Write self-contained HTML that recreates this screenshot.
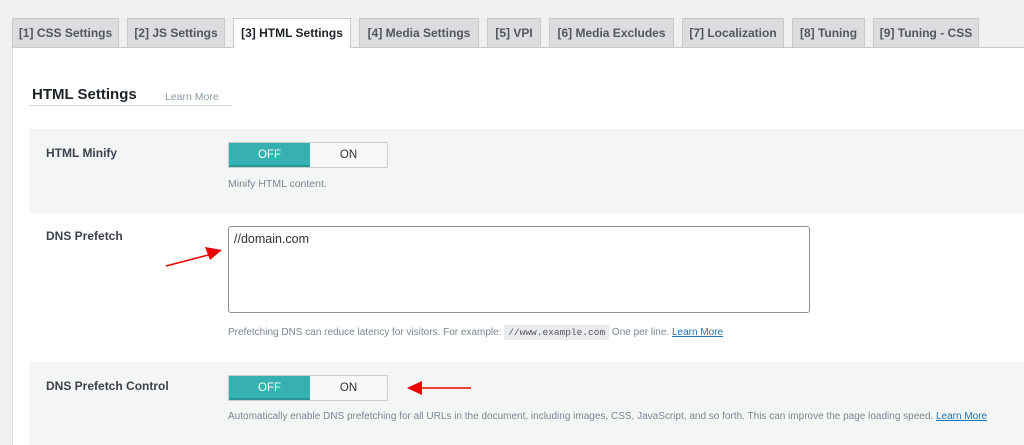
<!DOCTYPE html>
<html><head><meta charset="utf-8"><style>
body{margin:0;width:1024px;height:445px;background:#f0f0f1;font-family:"Liberation Sans",sans-serif;position:relative;overflow:hidden}
.tab{position:absolute;top:18px;height:29px;background:#dcdcde;border:1px solid #c9c9cc;border-bottom:none;box-sizing:border-box;color:#50575e;font-size:12px;font-weight:bold;line-height:28px;text-align:center}
.tab.a{background:#fff;color:#1d2327;height:30px;z-index:2}
.panel{position:absolute;left:12px;top:47px;right:0;bottom:0;background:#fff;border-top:1px solid #c9c9cc;border-left:1px solid #e0e0e0}
.abs{position:absolute}
.lbl{position:absolute;left:46px;font-size:12px;font-weight:bold;color:#3c434a}
.desc{position:absolute;left:228px;font-size:10.5px;color:#7a8791;white-space:nowrap}
.tg{position:absolute;left:228px;width:160px;height:26px;border:1px solid #ccc;border-radius:2px;box-sizing:border-box;background:#f6f7f7;font-size:11.5px}
.tg .off{position:absolute;left:0;top:0;width:81px;height:100%;background:#36b0b0;color:#fff;text-align:center;line-height:25px;border-bottom:2px solid #2a9595;box-sizing:border-box}
.tg .on{position:absolute;left:81px;top:0;right:0;height:100%;text-align:center;line-height:25px;color:#333}
a{color:#2271b1;text-decoration:underline}
</style></head><body>
<div class="tab" style="left:12px;width:107px">[1] CSS Settings</div>
<div class="tab" style="left:127px;width:98px">[2] JS Settings</div>
<div class="tab a" style="left:233px;width:118px">[3] HTML Settings</div>
<div class="tab" style="left:359px;width:120px">[4] Media Settings</div>
<div class="tab" style="left:487px;width:54px">[5] VPI</div>
<div class="tab" style="left:549px;width:125px">[6] Media Excludes</div>
<div class="tab" style="left:682px;width:102px">[7] Localization</div>
<div class="tab" style="left:792px;width:73px">[8] Tuning</div>
<div class="tab" style="left:873px;width:106px">[9] Tuning - CSS</div>
<div class="panel"></div>
<div class="abs" style="left:32px;top:86px;font-size:15px;font-weight:bold;color:#1d2327">HTML Settings</div>
<div class="abs" style="left:165px;top:91px;font-size:10.5px;color:#8a9aa8">Learn More</div>
<div class="abs" style="left:29px;top:105px;width:203px;height:1px;background:#d5d5d5"></div>

<div class="abs" style="left:29px;top:129px;right:0;height:84px;background:#f4f5f5"></div>
<div class="lbl" style="top:146px">HTML Minify</div>
<div class="tg" style="top:142px"><div class="off">OFF</div><div class="on">ON</div></div>
<div class="desc" style="top:178px">Minify HTML content.</div>

<div class="lbl" style="top:229px">DNS Prefetch</div>
<div class="abs" style="left:228px;top:226px;width:582px;height:87px;border:1px solid #8c8f94;border-radius:3px;box-sizing:border-box;background:#fff;font-size:12.5px;color:#2c3338;padding:5px 0 0 5px">//domain.com</div>
<div class="desc" style="top:327px;font-size:10px;letter-spacing:0px">Prefetching DNS can reduce latency for visitors. For example: <span style="font-family:'Liberation Mono',monospace;background:#e8ecef;padding:2px 4px;font-size:9.5px;color:#555">//www.example.com</span> One per line. <a>Learn More</a></div>

<div class="abs" style="left:29px;top:362px;right:0;height:83px;background:#f4f5f5"></div>
<div class="lbl" style="top:379px">DNS Prefetch Control</div>
<div class="tg" style="top:375px"><div class="off">OFF</div><div class="on">ON</div></div>
<div class="desc" style="top:411px;font-size:10px;letter-spacing:0px">Automatically enable DNS prefetching for all URLs in the document, including images, CSS, JavaScript, and so forth. This can improve the page loading speed. <a>Learn More</a></div>

<svg class="abs" style="left:0;top:0" width="1024" height="445">
<line x1="166" y1="266" x2="212" y2="254" stroke="#e00" stroke-width="1.5"/>
<polygon points="222,250 205,247 210,260" fill="#e00"/>
<line x1="420" y1="388" x2="471" y2="388" stroke="#e00" stroke-width="1.5"/>
<polygon points="407,388 422,381 422,395" fill="#e00"/>
</svg>
</body></html>
